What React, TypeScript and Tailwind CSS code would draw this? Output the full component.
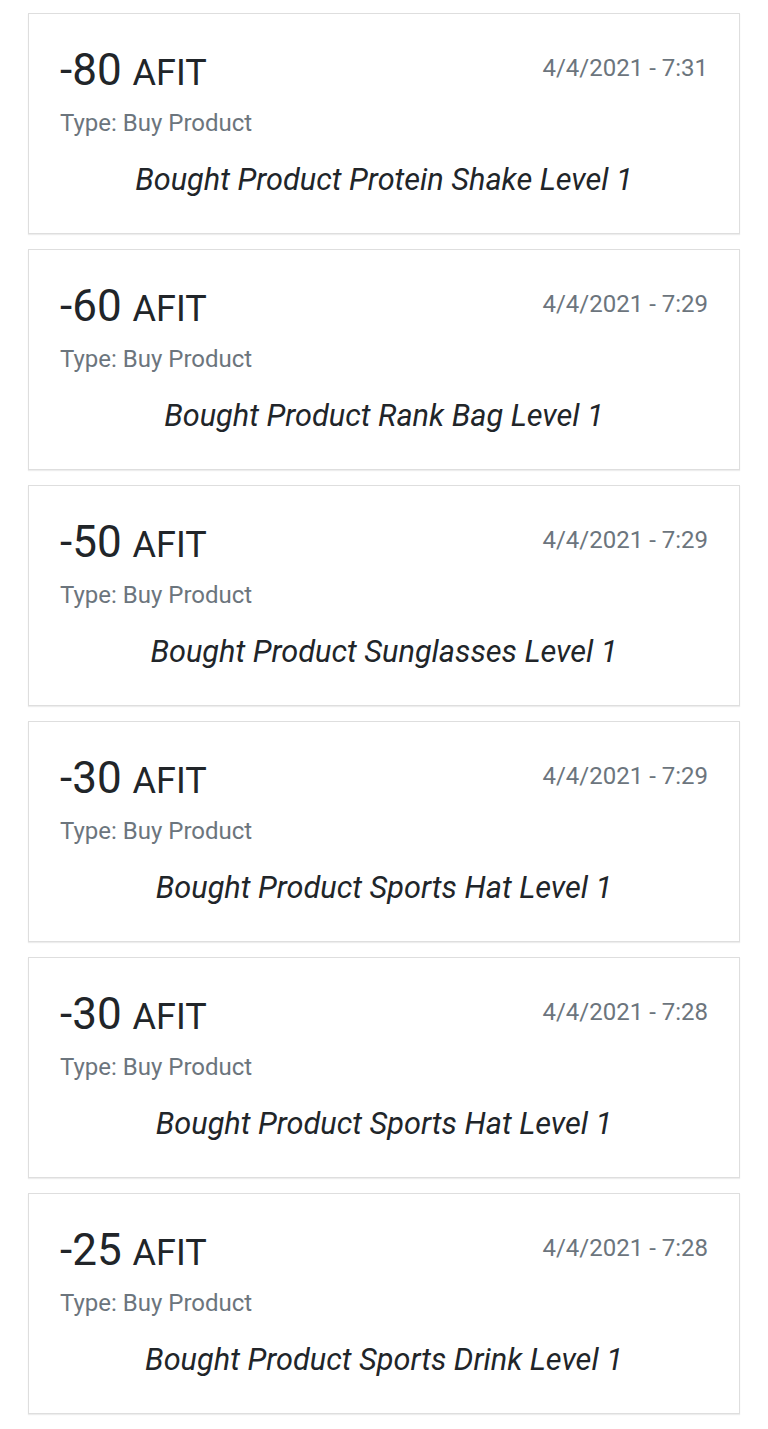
import React from 'react';

// One row of the wallet history
interface Transaction {
    amount: number;
    date: string;
    type: string;
    memo: string;
}

const transactions: Transaction[] = [
    {amount: -80, date: '4/4/2021 - 7:31', type: 'Buy Product', memo: 'Bought Product Protein Shake Level 1'},
    {amount: -60, date: '4/4/2021 - 7:29', type: 'Buy Product', memo: 'Bought Product Rank Bag Level 1'},
    {amount: -50, date: '4/4/2021 - 7:29', type: 'Buy Product', memo: 'Bought Product Sunglasses Level 1'},
    {amount: -30, date: '4/4/2021 - 7:29', type: 'Buy Product', memo: 'Bought Product Sports Hat Level 1'},
    {amount: -30, date: '4/4/2021 - 7:28', type: 'Buy Product', memo: 'Bought Product Sports Hat Level 1'},
    {amount: -25, date: '4/4/2021 - 7:28', type: 'Buy Product', memo: 'Bought Product Sports Drink Level 1'},
];

const TransactionCard: React.FC<{ tx: Transaction }> = ({tx}) => (
    <div
        className="h-[221px] bg-white border border-[#dedede] shadow-[0_1px_1px_rgba(0,0,0,0.07)] px-[31px] pt-[32px]">
        <div className="flex justify-between items-start">
            <div className="text-[#212529] text-[44px] leading-[48px]">
                {tx.amount} <span className="text-[36px]">AFIT</span>
            </div>
            <div className="mt-[8px] text-[24px] leading-[28px] text-[#6c757d]">{tx.date}</div>
        </div>
        <div className="mt-[12px] text-[24px] leading-[28px] text-[#6c757d]">Type: {tx.type}</div>
        <div className="mt-[25px] text-center italic text-[30.7px] leading-[36px] text-[#212529]">{tx.memo}</div>
    </div>
);

const App: React.FC = () => {
    return (
        <div className="min-h-screen bg-white font-['Roboto',sans-serif] px-[28px] pt-[13px] pb-[15px]">
            <div className="flex flex-col gap-[15px]">
                {transactions.map((tx, i) => (
                    <TransactionCard key={i} tx={tx}/>
                ))}
            </div>
        </div>
    );
};

export default App;
